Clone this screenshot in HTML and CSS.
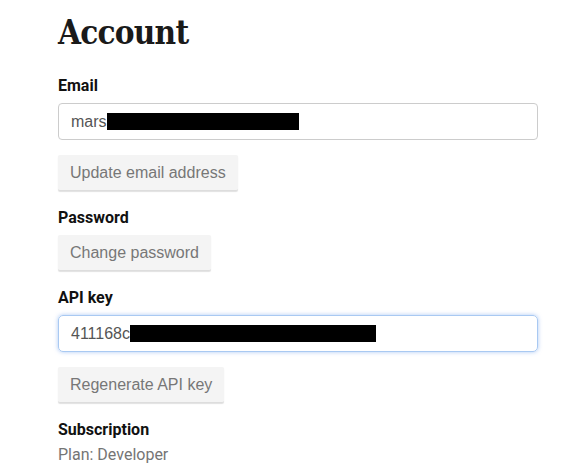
FILE: index.html
```html
<!DOCTYPE html>
<html>
<head>
<meta charset="utf-8">
<link rel="stylesheet" href="styles.css">
</head>
<body>
<main class="page">
  <h1 class="title">Account</h1>
  <section class="field">
    <h2 class="label">Email</h2>
    <div class="input"><span class="value">mars</span><span class="redact redact-email"></span></div>
    <button class="btn">Update email address</button>
  </section>
  <section class="field">
    <h2 class="label">Password</h2>
    <button class="btn">Change password</button>
  </section>
  <section class="field">
    <h2 class="label">API key</h2>
    <div class="input focus"><span class="value">411168c</span><span class="redact redact-key"></span></div>
    <button class="btn">Regenerate API key</button>
  </section>
  <section class="field">
    <h2 class="label">Subscription</h2>
    <p class="plan">Plan: Developer</p>
  </section>
</main>
</body>
</html>
```
FILE: styles.css
```css
html, body { margin: 0; padding: 0; background: #fff; }
.page { padding: 13px 39px 0 58px; width: 480px; }
.title {
  font-family: "DejaVu Serif Condensed", "DejaVu Serif", serif;
  font-stretch: semi-condensed;
  font-weight: bold;
  font-size: 33px;
  letter-spacing: -0.8px;
  color: #1a1a1a;
  margin: 0 0 23px;
  line-height: 40px;
}
.field { display: flex; flex-direction: column; align-items: flex-start; }
.label {
  font-family: Roboto, sans-serif;
  font-weight: bold;
  font-size: 16px;
  color: #111;
  margin: 0 0 8px;
  line-height: 19px;
}
.input {
  box-sizing: border-box;
  width: 480px;
  height: 37px;
  border: 1px solid #ccc;
  border-radius: 4px;
  display: flex;
  align-items: center;
  padding: 0 12px;
  font-family: "Liberation Sans", Arial, sans-serif;
  font-size: 16px;
  color: #555;
}
.input.focus {
  border-color: #a9c9f2;
  border-radius: 5px;
  box-shadow: 0 0 4px rgba(102,155,233,0.55);
}
.redact { display: inline-block; background: #000; height: 17px; }
.redact-email { width: 192px; }
.redact-key { width: 246px; }
.input + .btn { margin-top: 15px; }
.btn {
  font-family: "Liberation Sans", Arial, sans-serif;
  font-size: 16px;
  color: #777;
  background: #f4f4f4;
  border: none;
  border-bottom: 1px solid #ddd;
  border-radius: 2px;
  height: 36px;
  padding: 0 12px;
  margin: 0 0 17px;
  box-shadow: 0 1px 1px rgba(0,0,0,0.12);
}
.plan {
  font-family: Roboto, sans-serif;
  font-size: 16px;
  color: #757575;
  margin: -2px 0 0;
  line-height: 19px;
}
```
